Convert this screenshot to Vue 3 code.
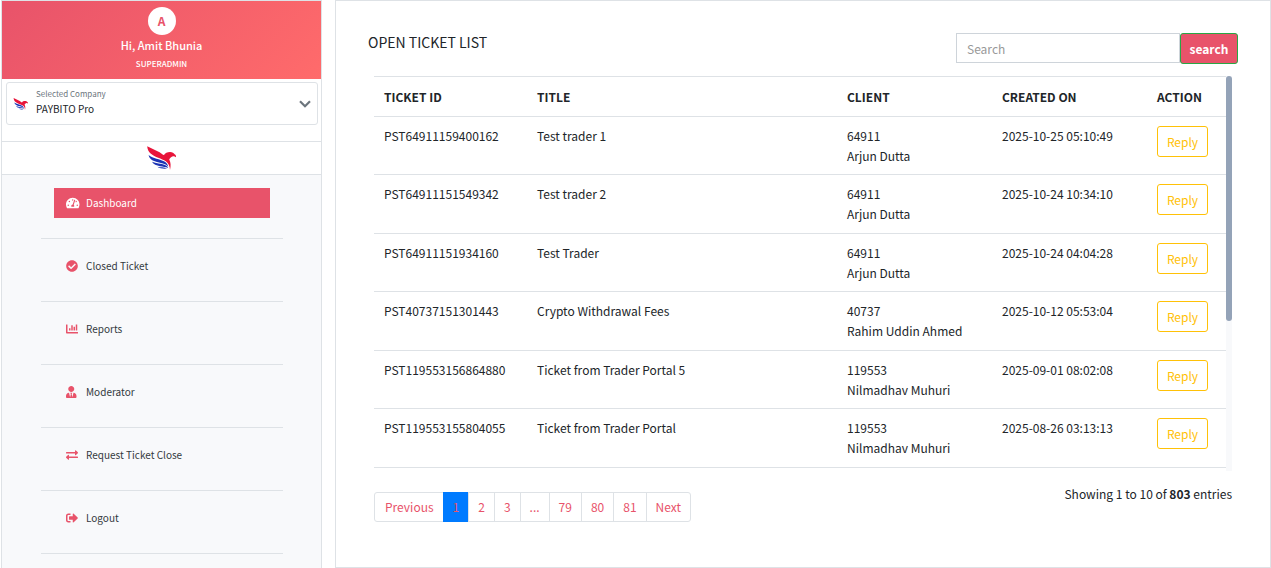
<script setup>
import { ref, h } from 'vue'

const search = ref('')
const company = ref('PAYBITO Pro')

const BirdLogo = () =>
  h('svg', { viewBox: '0 0 30 24', 'aria-hidden': 'true' }, [
    h('path', { fill: '#e8143a', d: 'M0.2 0.2L12.6 6.2C14.6 7.4 15.6 9 17 9C18 6.9 20.4 6 23 6C25.4 6 27 7.2 27.6 8.2C28.8 8.8 29.2 9.8 29 11.2C28 10.3 27 10 26 10.2C24.4 10.8 22.8 11.8 22.2 13.6C23.8 16.6 24 20 23 24C22.8 20.2 21.6 17.2 18.8 15.2C14.6 12.6 8 11.6 3.6 7.6C1.4 5.6 0.4 3 0.2 0.2Z' }),
    h('path', { fill: '#1c34b4', d: 'M1.6 9C6 12.8 13 12.8 17.4 15.6C19.6 17 20.8 18.6 21.2 20.4C18 17.4 14 17 10 16C6 15 2.4 13 1.6 9Z' }),
    h('path', { fill: '#1c34b4', d: 'M5 15.8C9 17.8 14 17.4 18 19C19.8 19.8 20.8 20.8 21.2 22C18.6 20.8 16 20.8 13 20.2C9.6 19.4 6.4 18.4 5 15.8Z' }),
    h('path', { fill: '#1c34b4', d: 'M10.4 20.8C13.6 21.6 17 21 20.4 22.6C17 23 12.8 22.8 10.4 20.8Z' }),
  ])

const menu = [
  { label: 'Dashboard', box: '0 0 576 512', wide: true, active: true, path: 'M288 32C128.94 32 0 160.94 0 320c0 52.8 14.25 102.26 39.06 144.8 5.61 9.62 16.3 15.2 27.44 15.2h443c11.14 0 21.83-5.58 27.44-15.2C561.75 422.26 576 372.8 576 320c0-159.06-128.94-288-288-288zm0 64c14.71 0 26.58 10.13 30.32 23.65-1.11 2.26-2.64 4.23-3.45 6.67l-9.22 27.67c-5.13 3.49-10.97 6.01-17.64 6.01-17.67 0-32-14.33-32-32S270.33 96 288 96zM96 384c-17.67 0-32-14.33-32-32s14.33-32 32-32 32 14.33 32 32-14.33 32-32 32zm48-160c-17.67 0-32-14.33-32-32s14.33-32 32-32 32 14.33 32 32-14.33 32-32 32zm246.77-72.41l-61.33 184C343.13 347.33 352 364.54 352 384c0 11.72-3.38 22.55-8.88 32H232.88c-5.5-9.45-8.88-20.28-8.88-32 0-33.94 26.5-61.43 59.9-63.59l61.34-184.01c4.17-12.56 17.73-19.45 30.36-15.17 12.57 4.19 19.35 17.79 15.17 30.36zm14.66 57.2l15.52-46.55c3.47-1.29 7.13-2.23 11.05-2.23 17.67 0 32 14.33 32 32s-14.33 32-32 32c-11.38-.01-20.89-6.28-26.57-15.22zM480 384c-17.67 0-32-14.33-32-32s14.33-32 32-32 32 14.33 32 32-14.33 32-32 32z' },
  { label: 'Closed Ticket', box: '0 0 512 512', path: 'M504 256c0 136.967-111.033 248-248 248S8 392.967 8 256 119.033 8 256 8s248 111.033 248 248zM227.314 387.314l184-184c6.248-6.248 6.248-16.379 0-22.627l-22.627-22.627c-6.248-6.249-16.379-6.249-22.628 0L216 308.118l-70.059-70.059c-6.248-6.248-16.379-6.248-22.628 0l-22.627 22.627c-6.248 6.248-6.248 16.379 0 22.627l104 104c6.249 6.249 16.379 6.249 22.628.001z' },
  { label: 'Reports', box: '0 0 512 512', path: 'M332.8 320h38.4c6.4 0 12.8-6.4 12.8-12.8V172.8c0-6.4-6.4-12.8-12.8-12.8h-38.4c-6.4 0-12.8 6.4-12.8 12.8v134.4c0 6.4 6.4 12.8 12.8 12.8zm96 0h38.4c6.4 0 12.8-6.4 12.8-12.8V76.8c0-6.4-6.4-12.8-12.8-12.8h-38.4c-6.4 0-12.8 6.4-12.8 12.8v230.4c0 6.4 6.4 12.8 12.8 12.8zm-288 0h38.4c6.4 0 12.8-6.4 12.8-12.8v-70.4c0-6.4-6.4-12.8-12.8-12.8h-38.4c-6.4 0-12.8 6.4-12.8 12.8v70.4c0 6.4 6.4 12.8 12.8 12.8zm96 0h38.4c6.4 0 12.8-6.4 12.8-12.8V108.8c0-6.4-6.4-12.8-12.8-12.8h-38.4c-6.4 0-12.8 6.4-12.8 12.8v198.4c0 6.4 6.4 12.8 12.8 12.8zM496 384H64V80c0-8.84-7.16-16-16-16H16C7.16 64 0 71.16 0 80v336c0 17.67 14.33 32 32 32h464c8.84 0 16-7.16 16-16v-32c0-8.84-7.16-16-16-16z' },
  { label: 'Moderator', box: '0 0 448 512', path: 'M224 256c70.7 0 128-57.3 128-128S294.7 0 224 0 96 57.3 96 128s57.3 128 128 128zm95.8 32.6L272 480l-32-136 32-56h-96l32 56-32 136-47.8-191.4C56.9 292 0 350.3 0 422.4V464c0 26.5 21.5 48 48 48h352c26.5 0 48-21.5 48-48v-41.6c0-72.1-56.9-130.4-128.2-133.8z' },
  { label: 'Request Ticket Close', box: '0 0 512 512', path: 'M0 168v-16c0-13.255 10.745-24 24-24h360V80c0-21.367 25.899-32.042 40.971-16.971l80 80c9.372 9.373 9.372 24.569 0 33.941l-80 80C409.956 271.982 384 261.456 384 240v-48H24c-13.255 0-24-10.745-24-24zm488 152H128v-48c0-21.314-25.862-32.08-40.971-16.971l-80 80c-9.372 9.373-9.372 24.569 0 33.941l80 80C102.057 463.997 128 453.437 128 432v-48h360c13.255 0 24-10.745 24-24v-16c0-13.255-10.745-24-24-24z' },
  { label: 'Logout', box: '0 0 512 512', path: 'M497 273L329 441c-15 15-41 4.5-41-17v-96H152c-13.3 0-24-10.7-24-24v-96c0-13.3 10.7-24 24-24h136V88c0-21.4 25.9-32 41-17l168 168c9.3 9.4 9.3 24.6 0 34zM192 436v-40c0-6.6-5.4-12-12-12H96c-17.7 0-32-14.3-32-32V160c0-17.7 14.3-32 32-32h84c6.6 0 12-5.4 12-12V76c0-6.6-5.4-12-12-12H96c-53 0-96 43-96 96v192c0 53 43 96 96 96h84c6.6 0 12-5.4 12-12z' },
]

const tickets = [
  { id: 'PST64911159400162', title: 'Test trader 1', code: '64911', client: 'Arjun Dutta', created: '2025-10-25 05:10:49' },
  { id: 'PST64911151549342', title: 'Test trader 2', code: '64911', client: 'Arjun Dutta', created: '2025-10-24 10:34:10' },
  { id: 'PST64911151934160', title: 'Test Trader', code: '64911', client: 'Arjun Dutta', created: '2025-10-24 04:04:28' },
  { id: 'PST40737151301443', title: 'Crypto Withdrawal Fees', code: '40737', client: 'Rahim Uddin Ahmed', created: '2025-10-12 05:53:04' },
  { id: 'PST119553156864880', title: 'Ticket from Trader Portal 5', code: '119553', client: 'Nilmadhav Muhuri', created: '2025-09-01 08:02:08' },
  { id: 'PST119553155804055', title: 'Ticket from Trader Portal', code: '119553', client: 'Nilmadhav Muhuri', created: '2025-08-26 03:13:13' },
]

const pages = ['Previous', '1', '2', '3', '...', '79', '80', '81', 'Next']
</script>

<template>
  <div class="page">
    <aside class="sidebar">
      <header class="user">
        <span class="avatar">A</span>
        <span class="name">Hi, Amit Bhunia</span>
        <span class="role">SUPERADMIN</span>
      </header>

      <div class="company-bar">
        <div class="company">
          <BirdLogo class="company-logo" />
          <div class="company-field">
            <label for="company">Selected Company</label>
            <select id="company" v-model="company">
              <option>PAYBITO Pro</option>
            </select>
          </div>
          <svg class="chevron" viewBox="0 0 12 8" aria-hidden="true">
            <path d="M1 1.2L6 6.2L11 1.2" fill="none" stroke="#6c757d" stroke-width="2.2" />
          </svg>
        </div>
      </div>

      <div class="brand"><BirdLogo class="brand-logo" /></div>

      <nav>
        <ul class="menu">
          <li v-for="item in menu" :key="item.label">
            <a href="#" :class="{ active: item.active }">
              <span class="icon">
                <svg :viewBox="item.box" :class="{ wide: item.wide }" aria-hidden="true"><path :d="item.path" /></svg>
              </span>
              {{ item.label }}
            </a>
          </li>
        </ul>
      </nav>
    </aside>

    <main class="card">
      <div class="top">
        <h1>OPEN TICKET LIST</h1>
        <form class="search" @submit.prevent>
          <input v-model="search" type="text" placeholder="Search" aria-label="Search" />
          <button type="submit">search</button>
        </form>
      </div>

      <div class="list">
        <table>
          <colgroup>
            <col class="c-id" /><col /><col class="c-mid" /><col class="c-mid" /><col class="c-action" />
          </colgroup>
          <thead>
            <tr><th>TICKET ID</th><th>TITLE</th><th>CLIENT</th><th>CREATED ON</th><th>ACTION</th></tr>
          </thead>
          <tbody>
            <tr v-for="t in tickets" :key="t.id">
              <td>{{ t.id }}</td>
              <td>{{ t.title }}</td>
              <td>{{ t.code }}<br />{{ t.client }}</td>
              <td>{{ t.created }}</td>
              <td><button type="button" class="reply">Reply</button></td>
            </tr>
          </tbody>
        </table>
        <div class="track"><div class="thumb"></div></div>
      </div>

      <div class="bottom">
        <ul class="pager">
          <li v-for="p in pages" :key="p"><a href="#" :class="{ current: p === '1' }">{{ p }}</a></li>
        </ul>
        <p class="summary">Showing 1 to 10 of <b>803</b> entries</p>
      </div>
    </main>
  </div>
</template>

<style>
body {
  margin: 0;
  background: #fff;
}
</style>

<style scoped>
* {
  box-sizing: border-box;
}
.page {
  display: grid;
  grid-template-columns: 321px minmax(0, 1fr);
  gap: 13px;
  padding-left: 1px;
  min-height: 100vh;
  color: #212529;
  font: 12px/20px "Noto Sans CJK SC", "Noto Sans", sans-serif;
}
button,
input,
select {
  font: inherit;
}
a {
  text-decoration: none;
}
ul {
  list-style: none;
  margin: 0;
  padding: 0;
}

.sidebar {
  border: 1px solid #dee2e6;
  border-bottom: 0;
  background: #f8f9fb;
}
.user {
  display: flex;
  flex-direction: column;
  align-items: center;
  height: 78px;
  padding-top: 6px;
  color: #fff;
  background: linear-gradient(135deg, #e8536a, #ff6b6b);
}
.avatar {
  width: 28px;
  height: 28px;
  border-radius: 50%;
  background: #fff;
  color: #e8536a;
  font-weight: 700;
  line-height: 28px;
  text-align: center;
}
.name {
  font-size: 11px;
  font-weight: 500;
  line-height: 20px;
}
.role {
  font-size: 8px;
  font-weight: 500;
  line-height: 18px;
}
.company-bar {
  padding: 3px 3px 16px 4px;
  background: #fff;
}
.company {
  display: flex;
  align-items: center;
  height: 43px;
  padding: 0 6px;
  border: 1px solid #dee2e6;
  border-radius: 3px;
}
.company-logo {
  width: 16px;
  height: 12px;
}
.company-field {
  display: flex;
  flex: 1;
  flex-direction: column;
  padding: 0 0 4px 7px;
}
.company-field label {
  color: #6c757d;
  font-size: 8px;
  line-height: 14px;
}
.company-field select {
  appearance: none;
  border: 0;
  padding: 0;
  background: transparent;
  color: #212529;
  font-size: 10px;
  line-height: 16px;
}
.chevron {
  width: 12px;
  height: 8px;
}
.brand {
  display: flex;
  justify-content: center;
  padding: 4px 0;
  border: 1px solid #dee2e6;
  border-width: 1px 0;
  background: #fff;
}
.brand-logo {
  width: 30px;
  height: 24px;
}
.menu {
  padding: 1px 38px 0 39px;
}
.menu li {
  padding: 12px 13px 20px;
  border-bottom: 1px solid #dee2e6;
}
.menu a {
  display: flex;
  align-items: center;
  height: 30px;
  padding-left: 12px;
  color: #343a40;
  font-size: 10px;
}
.menu a.active {
  background: #e8536a;
  color: #fff;
}
.icon {
  display: flex;
  width: 20px;
  color: #e8536a;
}
.active .icon {
  color: #fff;
}
.icon svg {
  height: 12px;
  fill: currentColor;
}

.card {
  min-width: 0;
  padding: 32px;
  border: 1px solid #dee2e6;
}
.top {
  display: flex;
  justify-content: space-between;
}
h1 {
  margin: 0;
  font-size: 14px;
  font-weight: 400;
  line-height: 18px;
}
.search {
  display: flex;
  align-items: flex-start;
}
.search input {
  width: 224px;
  height: 30px;
  padding: 0 10px;
  border: 1px solid #ced4da;
  border-radius: 0;
  outline: 0;
}
.search input::placeholder {
  color: #999;
}
.search button {
  width: 58px;
  height: 31px;
  padding: 0;
  border: 1px solid #28a745;
  border-radius: 3px;
  background: #e8536a;
  color: #fff;
  font-weight: 700;
}
.list {
  display: flex;
  margin: 12px 6px 0;
}
table {
  flex: 1;
  table-layout: fixed;
  border-collapse: separate;
  border-spacing: 0;
  align-self: flex-start;
}
.c-id {
  width: 153px;
}
.c-mid {
  width: 155px;
}
.c-action {
  width: 79px;
}
th {
  height: 41px;
  padding: 0 10px;
  border: 1px solid #dee2e6;
  border-width: 1px 0;
  text-align: left;
}
td {
  height: 58px;
  padding: 9px 10px 8px;
  border-bottom: 1px solid #dee2e6;
  vertical-align: top;
}
tr:nth-child(even) td {
  height: 59px;
}
.reply {
  display: block;
  width: 51px;
  height: 31px;
  padding: 0;
  border: 1px solid #ffc107;
  border-radius: 3px;
  background: transparent;
  color: #ffc107;
}
.track {
  width: 6px;
  margin-bottom: -3px;
  background: #f8f9fb;
}
.thumb {
  height: 62%;
  border-radius: 3px;
  background: #94a3b8;
}
.bottom {
  display: flex;
  justify-content: space-between;
  align-items: flex-start;
  margin: 16px 6px 0;
}
.pager {
  display: flex;
  margin-top: 8px;
}
.pager a {
  display: block;
  height: 30px;
  margin-left: -1px;
  padding: 0 9px;
  border: 1px solid #dee2e6;
  color: #e8536a;
  line-height: 28px;
}
.pager li:first-child a {
  margin-left: 0;
  padding-left: 10px;
  border-radius: 3px 0 0 3px;
}
.pager li:last-child a {
  border-radius: 0 3px 3px 0;
}
.pager a.current {
  border-color: #007bff;
  background: #007bff;
}
.summary {
  margin: 0;
}
</style>
